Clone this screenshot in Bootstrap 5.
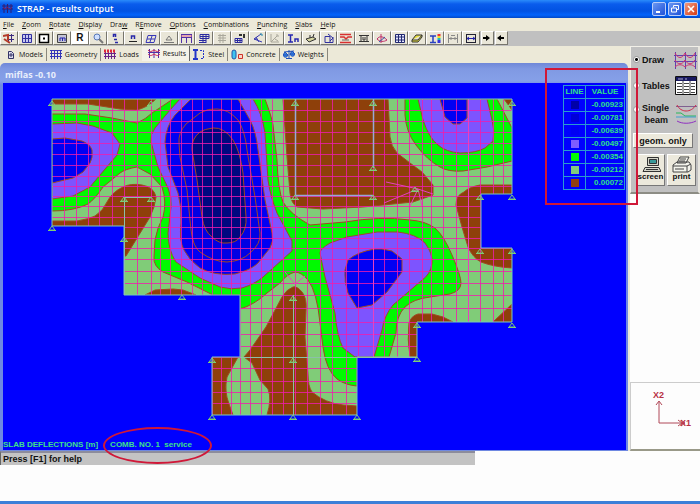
<!DOCTYPE html>
<html lang="en">
<head>
<meta charset="utf-8">
<meta name="viewport" content="width=device-width, initial-scale=1">
<title>STRAP - results output</title>
<link href="https://cdn.jsdelivr.net/npm/bootstrap@5.3.0/dist/css/bootstrap.min.css" rel="stylesheet">
<style>
body{font-family:"Open Sans","Noto Sans",sans-serif;font-size:7px;line-height:12px;color:#111;background:#fdfdfd}
svg{display:block}
button{font:inherit;color:inherit}
.title-strip{height:18px;background:linear-gradient(#2a8bfa 0,#0a5cec 4px,#0152e2 11px,#0263fb 15px,#0148c6);color:#fff;font-size:9px;font-weight:600;padding:0 2px}
.win-btn{width:14px;height:14px;padding:0;border:1px solid #b9cdf8;border-radius:2px;background:linear-gradient(135deg,#6b97f2,#1d51d8)}
.win-close{background:linear-gradient(135deg,#f09a80,#d83c14)}
.win-set{gap:2px}
.menu-strip{height:13px;background:#ece9d8;padding-left:3px;gap:8px}
.menu-strip a{color:#111;text-decoration:none}
.tool-strip{height:15px;background:#c0c0c0}
.tool-set{display:grid;grid-template-columns:repeat(27,1fr);width:68.5%}
.tool-btn{height:14px;padding:0;border:1px solid;border-color:#fff #77756c #77756c #fff;background:#e9e6d8;display:flex;align-items:center;justify-content:center}
.tool-letter{background:#fff;font:700 10px/12px "Liberation Sans",sans-serif}
.arrow-btn{width:13px;margin-left:1px}
.beige{background:#ece9d8}
.tab-strip{height:17px;padding-left:3px}
.tab-btn{border:0;background:none;border-right:1px solid #8a887c;padding:0 3px;height:13px;display:flex;align-items:center;gap:3px;line-height:12px}
.tab-btn.current{height:15px;margin-top:-2px;padding-left:6px;background:#f4f2e8;border-right-color:#666}
.doc-frame{padding-right:2px}
.doc-win{padding:0 2px 1px 3px;border-radius:5px 5px 0 0;background:linear-gradient(#6f87d8 0,#8099e3 6px,#86a0e8 18px,#6f88e2 22px)}
.doc-title{height:20px;color:#e8eefc;font-size:9px;font-weight:700;padding:3px 0 0 2px;line-height:18px}
.plot{background:#00f}
.plot-note{left:0;bottom:0;color:#3fe08a;font:700 8px/11px "Liberation Sans",sans-serif;gap:12px}
.legend{right:1px;top:2px;width:62px;border-collapse:collapse;font:700 8px/12px "Liberation Sans",sans-serif;color:#2fe088}
.legend th,.legend td{border:1px solid #2a9ad0;padding:0;text-align:center;height:13px;white-space:nowrap}
.legend td:last-child{text-align:right;padding-right:1px}
.swatch{display:block;width:8px;height:8px;margin:0 auto}
.s1{background:#0000a8}.s2{background:#0000d8}.s3{background:#0000f4}.s4{background:#7f5cff}.s5{background:#0f0}.s6{background:#80cc7c}.s7{background:#924010}
.status-strip{width:67.8%;height:14px;background:#c3c3c3;border-top:2px solid #8c8c9c;border-left:1px solid #666;font:700 9px/12px "Liberation Sans",sans-serif;padding-left:2px}
.side{width:70px;flex:none}
.side-panel{background:#c0c0c0;border:1px solid;border-width:1px 2px 2px 1px;border-color:#f2f0e8 #e8e6de #8c8c84 #f2f0e8;padding:3px 1px 6px 2px;font:700 9px/13px "Liberation Sans",sans-serif}
.side-opt{display:flex;align-items:center;gap:2px;min-height:19px;margin-bottom:7px}
.side-opt label{flex:1;white-space:nowrap;line-height:12px}
.side-opt input{appearance:none;width:7px;height:7px;border-radius:50%;border:1px solid #999;background:#fff;margin:0;flex:none}
.side-opt input:checked{background:radial-gradient(#000 0 1px,#fff 2px)}
.raised{border:1px solid;border-color:#fff #777 #777 #fff;background:#ece9dc;padding:0}
.geom{width:60px;height:15px;line-height:12px}
.big-set{gap:2px;padding:0 1px 0 3px;margin-top:6px}
.big-btn{flex:1;height:32px;display:flex;flex-direction:column;align-items:center;justify-content:flex-end;font-size:8px;line-height:8px;padding-bottom:4px}
.axis-box{border:1px solid #bbb;border-width:1px 0 2px 1px;border-color:#ccc #ccc #998 #ccc;height:69px}
.frame-mark{right:62px;top:22px;width:93px;height:137px;border:2px solid #d01838;pointer-events:none}
.oval-mark{left:103px;bottom:-13px;width:109px;height:37px;border:2px solid #d01838;border-radius:50%;pointer-events:none;z-index:2}
.foot{height:3px;background:#3c7fd8}
</style>
<script src="https://cdn.jsdelivr.net/npm/bootstrap@5.3.0/dist/js/bootstrap.bundle.min.js"></script>
</head>
<body>
<div class="d-flex flex-column min-vh-100">
<header>
  <div class="title-strip d-flex align-items-center">
    <svg width="11" height="12" viewBox="0 0 11 12" stroke="#301c70" fill="none"><path d="M0 3h11M0 6h11M2 1v9M5.500 1v9M9 1v9"/><path d="M1 4l2 2 2-2 3 2 2-2" stroke="#80205c"/></svg>
    <span class="ps-1">STRAP - results output</span>
    <div class="ms-auto d-flex win-set">
      <button class="win-btn" aria-label="Minimize"><svg width="12" height="12"><path d="M3 9h4" stroke="#fff" stroke-width="2"/></svg></button>
      <button class="win-btn" aria-label="Restore"><svg width="12" height="12" fill="none" stroke="#fff"><path d="M4.500 4.500v-2h5v4h-2M2.500 5h5v4h-5z"/></svg></button>
      <button class="win-btn win-close" aria-label="Close"><svg width="12" height="12"><path d="M3 3l6 6M9 3l-6 6" stroke="#fff" stroke-width="1.600"/></svg></button>
    </div>
  </div>
  <nav class="menu-strip d-flex align-items-center">
    <a href="#"><u>F</u>ile</a><a href="#"><u>Z</u>oom</a><a href="#"><u>R</u>otate</a><a href="#"><u>D</u>isplay</a><a href="#">Dra<u>w</u></a><a href="#">R<u>E</u>move</a><a href="#"><u>O</u>ptions</a><a href="#"><u>C</u>ombinations</a><a href="#"><u>P</u>unching</a><a href="#"><u>S</u>labs</a><a href="#"><u>H</u>elp</a>
  </nav>
  <div class="tool-strip d-flex">
    <div class="tool-set">
      <button class="tool-btn" aria-label="Pan"><svg width="12" height="11" fill="none" stroke="#3a2a80"><path d="M1 2.500h10M5.500 1v9M8.500 1v8M4 6.500h7"/><path d="M0 3l5-1v5M1 6l6 4" stroke="#b43a28" stroke-width="2"/></svg></button>
      <button class="tool-btn" aria-label="Full view"><svg width="12" height="11" fill="#c8c8f0" stroke="#3030a0"><path d="M1.500 1.500h9v8h-9zM4.500 1v9M7.500 1v9M1 5.500h10"/></svg></button>
      <button class="tool-btn" aria-label="Zoom centre"><svg width="12" height="11" fill="#fff" stroke="#000" stroke-width="1.500"><path d="M1.500 1.500h9v8h-9z"/><path d="M5 5.500h2" stroke-width="2"/></svg></button>
      <button class="tool-btn" aria-label="Zoom window"><svg width="12" height="11" fill="#c4c4d4" stroke="#444"><path d="M1.500 1.500h9v8h-9z"/><path d="M4 8V5h5v3M6.500 5v3" stroke="#2020b0"/></svg></button>
      <button class="tool-btn tool-letter">R</button>
      <button class="tool-btn" aria-label="Magnify"><svg width="12" height="11" fill="#cfe0ff" stroke="#5878b8"><circle cx="5" cy="4" r="3"/><path d="M7 6l4 4" stroke="#777" stroke-width="2"/></svg></button>
      <button class="tool-btn" aria-label="Node numbers"><svg width="12" height="11" fill="none" stroke="#2828a8"><path d="M4.500 4V1.500h2V4M5 6.500h3M6 9.500h3" stroke-width="1.500"/></svg></button>
      <button class="tool-btn" aria-label="Beam numbers"><svg width="12" height="11" fill="none" stroke="#2828a8"><path d="M4.500 6V3h3v3" stroke-width="1.500"/><path d="M2 8.500h8" stroke="#222"/></svg></button>
      <button class="tool-btn" aria-label="Element numbers"><svg width="12" height="11" fill="none" stroke="#3838b8"><path d="M3 2.500h8l-2 7H1zM2 6h8M7 3L5 9"/></svg></button>
      <button class="tool-btn" aria-label="Supports"><svg width="12" height="11" fill="none" stroke="#777"><path d="M3 7l3-4 3 4zM1 9.500h10"/></svg></button>
      <button class="tool-btn" aria-label="Loads"><svg width="13" height="11" fill="none" stroke="#5030a8"><path d="M1 1.500h11M1 4.500h11M1.500 1v9M6.500 4v6M11.500 1v9"/><path d="M1 3h11" stroke="#e06888"/></svg></button>
      <button class="tool-btn" aria-label="Mesh"><svg width="12" height="11" fill="none" stroke="#2828a0"><path d="M2 1.500h9v4H2zM2 3.500h9M5 1v9M8 1v9M1 7.500h7M1 9.500h7"/></svg></button>
      <button class="tool-btn" aria-label="Shade"><svg width="12" height="11" fill="none" stroke="#aaa89c"><path d="M2 2.500h8M2 5h8M2 7.500h8M4 1v9M7 1v9"/></svg></button>
      <button class="tool-btn" aria-label="Partial mesh"><svg width="12" height="11" fill="none" stroke="#2828a0"><path d="M1 5.500h7v4H1zM1 7.500h7M3.500 5v5M6 5v5"/><path d="M5 2h3M9 2h2M9 4h2" stroke="#333" stroke-width="2"/></svg></button>
      <button class="tool-btn" aria-label="Axes"><svg width="12" height="11" fill="none" stroke="#3838b0"><path d="M9 1L2 6l8 3M2 6h3M4 4l3 5"/><path d="M8 1h2v2" stroke="#28a"/></svg></button>
      <button class="tool-btn" aria-label="Diagram"><svg width="12" height="11" fill="none" stroke="#a8a69a"><path d="M2 1v8h8M2 9l6-6M7 2h2v2M6 6l3 2"/></svg></button>
      <button class="tool-btn" aria-label="Sections"><svg width="13" height="11" fill="none" stroke="#2828b0" stroke-width="1.500"><path d="M1 2h5M1 9h5M3.500 2v7M8 9V6h3v3"/></svg></button>
      <button class="tool-btn" aria-label="Material"><svg width="12" height="11" fill="#d4d4a0" stroke="#333"><path d="M1 6l7-2 3 2-7 3zM5 5V2M8 4l1-3"/></svg></button>
      <button class="tool-btn" aria-label="Rotate"><svg width="12" height="11" fill="none" stroke="#3030a0"><path d="M2 9.500V3.500h5v6zM5 1l5 4-3 3M2 9.500h8V4"/></svg></button>
      <button class="tool-btn" aria-label="Moments"><svg width="14" height="11" fill="none" stroke="#d83030"><path d="M1 1.500h11M1 9.500h11M1 4h4l2 2 2-2h4" stroke-width="1.500"/><path d="M3 7h7" stroke="#666"/></svg></button>
      <button class="tool-btn" aria-label="Section"><svg width="12" height="11" fill="none" stroke="#333"><path d="M1 2.500h10M1 8.500h10M3 3v5M9 3v5M5 4v3h2V4"/></svg></button>
      <button class="tool-btn" aria-label="Contours"><svg width="12" height="11" fill="none" stroke="#c03068"><path d="M1 6c3-4 7-2 10 1-3 2-7 2-10-1M5 1v9"/><path d="M3 9l6-5" stroke="#35a"/></svg></button>
      <button class="tool-btn" aria-label="Results table"><svg width="12" height="11" fill="#e8e8ff" stroke="#202870"><path d="M1.500 1.500h9v8h-9zM1 4h10M1 7h10M4.500 1v9M7.500 1v9"/></svg></button>
      <button class="tool-btn" aria-label="Erase"><svg width="12" height="11" fill="#e8e040" stroke="#333"><path d="M1 7l4-5h6L7 7zM1 7v2h6l4-5V2"/></svg></button>
      <button class="tool-btn" aria-label="Colours"><svg width="13" height="11" fill="none" stroke="#2840c0" stroke-width="1.500"><path d="M1 3h6M1 9.500h6M4 3v6"/><path d="M10 1v2" stroke="#e33" stroke-width="3"/><path d="M10 3v2" stroke="#ed2" stroke-width="3"/><path d="M10 5v2" stroke="#2bb" stroke-width="3"/><path d="M10 7v3" stroke="#33d" stroke-width="3"/></svg></button>
      <button class="tool-btn" aria-label="Dimensions"><svg width="12" height="11" fill="none" stroke="#888"><path d="M1.500 1v9M10.500 1v9M2 5.500h8M4 2.500h4M4 4v3M8 4v3"/></svg></button>
      <button class="tool-btn" aria-label="Width"><svg width="12" height="11" fill="none" stroke="#223"><path d="M1.500 1v9M10.500 1v9M1 1.500h10M1 9.500h10"/><path d="M2 5.500h8M4 4L2 5.500 4 7M8 4l2 1.500L8 7" stroke="#22a"/></svg></button>
    </div>
    <button class="tool-btn arrow-btn" aria-label="Next"><svg width="8" height="8"><path d="M0 3h3V1l4 3-4 3V5H0z"/></svg></button>
    <button class="tool-btn arrow-btn" aria-label="Previous"><svg width="8" height="8"><path d="M7 3H4V1L0 4l4 3V5h3z"/></svg></button>
  </div>
</header>
<main class="d-flex position-relative">
  <section class="flex-grow-1 position-relative">
    <nav class="tab-strip beige d-flex align-items-center">
      <button class="tab-btn"><svg width="10" height="10" fill="#dde" stroke="#336"><path d="M2.500 1.500h3l2 2v5h-5zM3 5h4M5 3v4"/></svg>Models</button>
      <button class="tab-btn"><svg width="12" height="11" fill="none" stroke="#3434b8"><path d="M0 1.500h12M0 4.500h12M0 7.500h12M1.500 1v9M4.500 1v9M7.500 1v9M10.500 1v9"/></svg>Geometry</button>
      <button class="tab-btn border-0"><svg width="12" height="11" fill="none" stroke="#6a2488"><path d="M0 4.500h12M0 7.500h12M1.500 1v9M4.500 1v9M7.500 1v9M10.500 1v9"/><path d="M0 2h12" stroke="#e02838" stroke-width="3" stroke-dasharray="2 1"/></svg>Loads</button>
      <button class="tab-btn current"><svg width="12" height="11" fill="none" stroke="#5030a8"><path d="M0 4.500h12M1.500 1v9M6 1v9M10.500 1v9"/><path d="M0 2c2 2 3 2 6 0 3 2 4 2 6 0M0 6c2 2 3 2 6 0 3 2 4 2 6 0" stroke="#d02858"/></svg>Results</button>
      <button class="tab-btn"><svg width="12" height="11" fill="none" stroke="#2436c8"><path d="M0 1h5M0 10h5M2.500 1v9" stroke-width="2"/><path d="M7 1.500h3.500v8H7" stroke-dasharray="2 1"/></svg>Steel</button>
      <button class="tab-btn"><svg width="12" height="11"><rect x="1" y="1" width="4" height="9" rx="2" fill="#40c4f0" stroke="#2454a8"/><path d="M7.500 5.500h4v4h-4z" fill="#f4d8c8" stroke="#d03028"/></svg>Concrete</button>
      <button class="tab-btn"><svg width="12" height="11" fill="#3888e8" stroke="#2050b8"><path d="M1 3l10-1M6 1v8M3 9.500h6"/><path d="M0 6h5c-1 3-4 3-5 0l2-3 3 3M7 5h5c-1 3-4 3-5 0l2-3 3 3"/></svg>Weights</button>
    </nav>
    <div class="beige doc-frame"><div class="doc-win">
      <div class="doc-title">miflas -0.10</div>
      <div class="plot position-relative">
        <svg width="100%" viewBox="3 83 623 367" role="img" aria-label="Slab deflection contours">
          <defs>
            <path id="slab" d="M52 99H512V194H481V248H512V322H417V357H357V415H212V357H240V295H124V226H52Z"/>
            <clipPath id="inside"><use href="#slab"/></clipPath>
            <path id="sup" d="M-3 3L0-1 3 3ZM-4 3.500H4" fill="none" stroke="#7ccc78"/>
          </defs>
          <g clip-path="url(#inside)" stroke="#a04824" stroke-width="1" stroke-linejoin="round">
            <use href="#slab" fill="#80cc78" stroke="none"/>
            <path fill="#00fa00" d="M52 114H85L112 118 137 123Q146 119 152 113L173 99H265Q272 118 273 125L277 160Q278 190 283 202 290 214 310 225L345 222Q380 216 410 220 425 221 435 228 444 236 452 255 461 276 461 283 461 291 450 294L430 297Q413 299 405 307 396 316 396 333L389 357H357V386Q345 385 337 379 326 370 323 347L320 323Q317 292 308 280 301 272 295 272 287 274 280 283L267 293Q254 305 240 309V295H213L187 282 163 272Q153 266 154 257L155 240Q157 228 163 217 167 202 162 187L150 174 137 167Q125 169 120 173L103 187Q95 199 88 204 74 211 52 211Z"/>
            <path fill="#7d54ff" d="M52 124L77 123 93 126 112 133 120 144 117 155 100 175 90 187 73 196 52 199Z"/>
            <path fill="#0000f4" d="M52 139L65 138 82 141Q90 144 92 150 93 158 90 163L83 172 73 178 52 183Z"/>
            <path fill="#7d54ff" d="M180 99L170 110 155 128Q150 134 151 142L158 167 168 188Q172 198 171 207L168 233Q168 250 176 262L200 278 220 287Q231 290 242 288 255 284 263 277L292 251V241L277 213Q270 195 268 180L265 133Q262 113 253 99Z"/>
            <path fill="#0000f4" d="M191 99L175 115Q166 126 165 142L168 167 178 193Q182 208 181 223 179 241 184 250 189 260 200 268 214 276 235 274 251 270 258 263L270 248Q274 241 272 233L265 200 258 150Q256 131 250 120L238 99Z"/>
            <path fill="#0000e4" d="M217 109Q208 108 200 113L186 124Q178 133 179 143L180 157 187 190 191 230Q193 247 200 252 214 262 227 262 242 261 250 253 261 244 260 233L255 197 247 150Q245 131 238 120 228 109 217 109Z"/>
            <path fill="#000880" d="M213 128Q204 129 200 132 191 139 192 150L197 180 202 217Q204 231 212 237 219 244 227 243 236 243 240 237 247 229 246 217L243 173Q240 151 233 140 224 127 213 128Z"/>
            <path fill="#7d54ff" d="M320 253Q320 249 330 243L347 237 377 232H398Q416 234 425 243 433 254 432 263 431 274 421 281L393 305Q384 316 382 330L374 357H355L343 348Q337 336 335 313L325 277Z"/>
            <path fill="#0000f4" d="M375 249H382L392 251 402 259V272L387 292 372 305 357 308 348 293Q344 282 345 270L348 260Q357 252 375 249Z"/>
            <path fill="#00fa00" d="M405 99V115Q406 132 416 145 427 160 440 167 448 172 463 171L487 167 512 161V128L497 99Z"/>
            <path fill="#7d54ff" d="M418 99L423 120Q429 138 438 145 446 152 460 153 476 153 485 148L493 141Q495 130 492 120L487 99Z"/>
            <path fill="#0000f4" d="M440 99L445 117 453 124H460L467 118V99Z"/>
            <g fill="#8e400a">
              <path d="M52 99V104H88L120 109 136 110Q147 108 156 99ZM504 99L512 110V99Z"/>
              <path d="M52 221H77Q89 219 95 216 103 211 107 202 112 192 123 187 131 183 142 185 154 187 156 197L154 207 150 217 142 230 126 256H124V226H52Z"/>
              <path d="M145 295L155 290 173 289 183 290 196 295Z"/>
              <path d="M283 99L287 157 290 193Q291 203 297 207L323 209 363 207 413 202 433 195V185L422 172 410 163 397 153Q391 146 390 137L388 99Z"/>
              <path d="M512 185H480Q469 187 464 192 456 195 456 205L462 227 468 247Q473 258 481 262 494 267 512 268Z"/>
              <path d="M410 357Q407 339 409 323 411 316 418 314H432L443 317 453 322H417V357ZM512 304L493 322H512Z"/>
              <path d="M293 287Q287 289 282 297L266 327 250 350 244 357 252 363 260 380 268 389Q272 399 267 415H357V406L343 405Q325 403 312 392 308 386 308 375L305 337 306 310Q307 298 302 292 297 286 293 287ZM212 357H238L227 377Q224 391 229 404L233 415H212Z"/>
            </g>
            <path fill="none" stroke="#f01cae" stroke-width="1" opacity=".8" d="M64.500 99V226M76.500 99V226M88.500 99V226M99.500 99V226M112.500 99V226M124.500 99V295M137.500 99V295M151.500 99V295M160.500 99V295M170.500 99V295M181.500 99V295M192.500 99V295M202.500 99V295M212.500 99V415M221.500 99V415M231.500 99V415M240.500 99V415M250.500 99V415M261.500 99V415M272.500 99V415M283.500 99V415M295.500 99V415M307.500 99V415M320.500 99V415M332.500 99V415M346.500 99V415M358.500 99V357M373.500 99V357M384.500 99V357M397.500 99V357M409.500 99V357M422.500 99V322M431.500 99V322M443.500 99V322M456.500 99V322M468.500 99V322M480.500 99V322M493.500 99V322M503.500 99V322M52 110.500H512M52 121.500H512M52 132.500H512M52 143.500H512M52 154.500H512M52 165.500H512M52 176.500H512M52 186.500H512M52 196.500H512M52 206.500H512M52 217.500H512M124 227.500H512M124 238.500H512M124 248.500H512M124 259.500H512M124 271.500H512M124 283.500H512M240 295.500H512M240 308.500H512M240 322.500H512M240 334.500H417M240 346.500H417M212 357.500H357M212 368.500H357M212 381.500H357M212 392.500H357M212 403.500H357"/>
            <path fill="none" stroke="#e840c0" d="M373.500 195V357M468.500 99V322M386 182L418 189 433 194M418 189L384 203M418 189L410 206M418 189L422 206M285 272L295 284 305 276"/>
          </g>
          <use href="#slab" fill="none" stroke="#78c8b4"/>
          <path fill="none" stroke="#98a8d8" stroke-width="1.500" d="M295.500 99V195.500H373M373.500 99V168"/>
          <path fill="none" stroke="#8cc0a8" d="M124.500 295V197.500H151M293.500 295V415M240 357.500H357M417 357.500H357"/>
          <g><use href="#sup" x="52" y="102"/><use href="#sup" x="151" y="102"/><use href="#sup" x="295" y="102"/><use href="#sup" x="373" y="102"/><use href="#sup" x="512" y="102"/><use href="#sup" x="52" y="227"/><use href="#sup" x="124" y="198"/><use href="#sup" x="151" y="198"/><use href="#sup" x="124" y="238"/><use href="#sup" x="182" y="296"/><use href="#sup" x="293" y="297"/><use href="#sup" x="295" y="196"/><use href="#sup" x="373" y="167"/><use href="#sup" x="373" y="196"/><use href="#sup" x="415" y="188"/><use href="#sup" x="480" y="196"/><use href="#sup" x="512" y="196"/><use href="#sup" x="480" y="250"/><use href="#sup" x="512" y="250"/><use href="#sup" x="512" y="324"/><use href="#sup" x="417" y="324"/><use href="#sup" x="417" y="358"/><use href="#sup" x="212" y="359"/><use href="#sup" x="293" y="359"/><use href="#sup" x="212" y="416"/><use href="#sup" x="293" y="416"/><use href="#sup" x="357" y="416"/></g>
        </svg>
        <div class="plot-note position-absolute d-flex"><span>SLAB DEFLECTIONS [m]</span><span>COMB. NO. 1&nbsp; service</span></div>
        <table class="legend position-absolute">
          <thead><tr><th scope="col">LINE</th><th scope="col">VALUE</th></tr></thead>
          <tbody>
            <tr><td><i class="swatch s1"></i></td><td>-0.00923</td></tr>
            <tr><td><i class="swatch s2"></i></td><td>-0.00781</td></tr>
            <tr><td><i class="swatch s3"></i></td><td>-0.00639</td></tr>
            <tr><td><i class="swatch s4"></i></td><td>-0.00497</td></tr>
            <tr><td><i class="swatch s5"></i></td><td>-0.00354</td></tr>
            <tr><td><i class="swatch s6"></i></td><td>-0.00212</td></tr>
            <tr><td><i class="swatch s7"></i></td><td>0.00072</td></tr>
          </tbody>
        </table>
      </div>
    </div></div>
    <div class="oval-mark position-absolute"></div>
  </section>
  <aside class="side d-flex flex-column justify-content-between">
    <div class="side-panel">
      <div class="side-opt"><input type="radio" name="mode" id="m1" checked><label for="m1">Draw</label>
        <svg width="23" height="18" fill="none" stroke="#6040b0"><path d="M0 4.500h23M0 10.500h23M1.500 1v17M11.500 1v17M21.500 1v17"/><path d="M1 2c3 6 7 6 10 0 3 6 7 6 10 0M1 9c3 5 7 5 10 0 3 5 7 5 10 0M1 16c3-3 7-3 10 0 3-3 7-3 10 0" stroke="#d03070"/></svg></div>
      <div class="side-opt"><input type="radio" name="mode" id="m2"><label for="m2">Tables</label>
        <svg width="22" height="19"><path d="M.5.500h21v18H.500z" fill="#fff" stroke="#111"/><path d="M1 1h20v4H1z" fill="#181860"/><path d="M3 3h5M10 3h2" stroke="#aac"/><path d="M2 7.500h5M9 7.500h5M16 7.500h4M2 10.500h5M9 10.500h5M16 10.500h4M2 13.500h5M9 13.500h5M16 13.500h4M2 16.500h5M9 16.500h5M16 16.500h4M8 5v13M15 5v13" stroke="#444"/></svg></div>
      <div class="side-opt"><input type="radio" name="mode" id="m3" class="align-self-start mt-1"><label for="m3">Single<br>&nbsp;beam</label>
        <svg width="21" height="22" fill="none"><path d="M0 3.500h21" stroke="#806090"/><path d="M1 2c4 8 14 8 19 0" stroke="#d02848"/><path d="M0 10h5l4 3h11" stroke="#28b858"/><path d="M0 14h20" stroke="#40a0d0"/><path d="M1 18c5 3 13 3 19 0" stroke="#9030c0"/></svg></div>
      <button class="raised geom">geom. only</button>
      <div class="d-flex big-set">
        <button class="raised big-btn"><svg width="20" height="17" fill="#d4d4c8" stroke="#333"><path d="M6.500 1.500h11v8h-11zM4 11.500h14l2 4H2z"/><path d="M8.500 3.500h7v4h-7z" fill="#389898"/><path d="M5 13.500h12"/></svg>screen</button>
        <button class="raised big-btn"><svg width="21" height="17" fill="#f4f4ec" stroke="#444"><path d="M6 7l3-6h9l-3 6zM2 9l4-3h12l2 3v5l-3 2H2z"/><path d="M2 10h14l4-2M16 10v6M4 13h9M9 3h6M8 5h6"/></svg>print</button>
      </div>
    </div>
    <div class="axis-box"><svg width="64" height="64" viewBox="0 0 64 64" fill="none" stroke="#b04858"><path d="M28 19V40H50M25 22l3-4 3 4M47 37l4 3-4 3M50 37l4 3-4 3"/><g fill="#b83044" stroke="none" font-family="Liberation Sans,sans-serif" font-size="9" font-weight="700"><text x="22" y="15">X2</text><text x="49" y="43">X1</text></g></svg></div>
  </aside>
  <div class="frame-mark position-absolute"></div>
</main>
<div class="status-strip">Press [F1] for help</div>
<div class="foot mt-auto"></div>
</div>
</body>
</html>
